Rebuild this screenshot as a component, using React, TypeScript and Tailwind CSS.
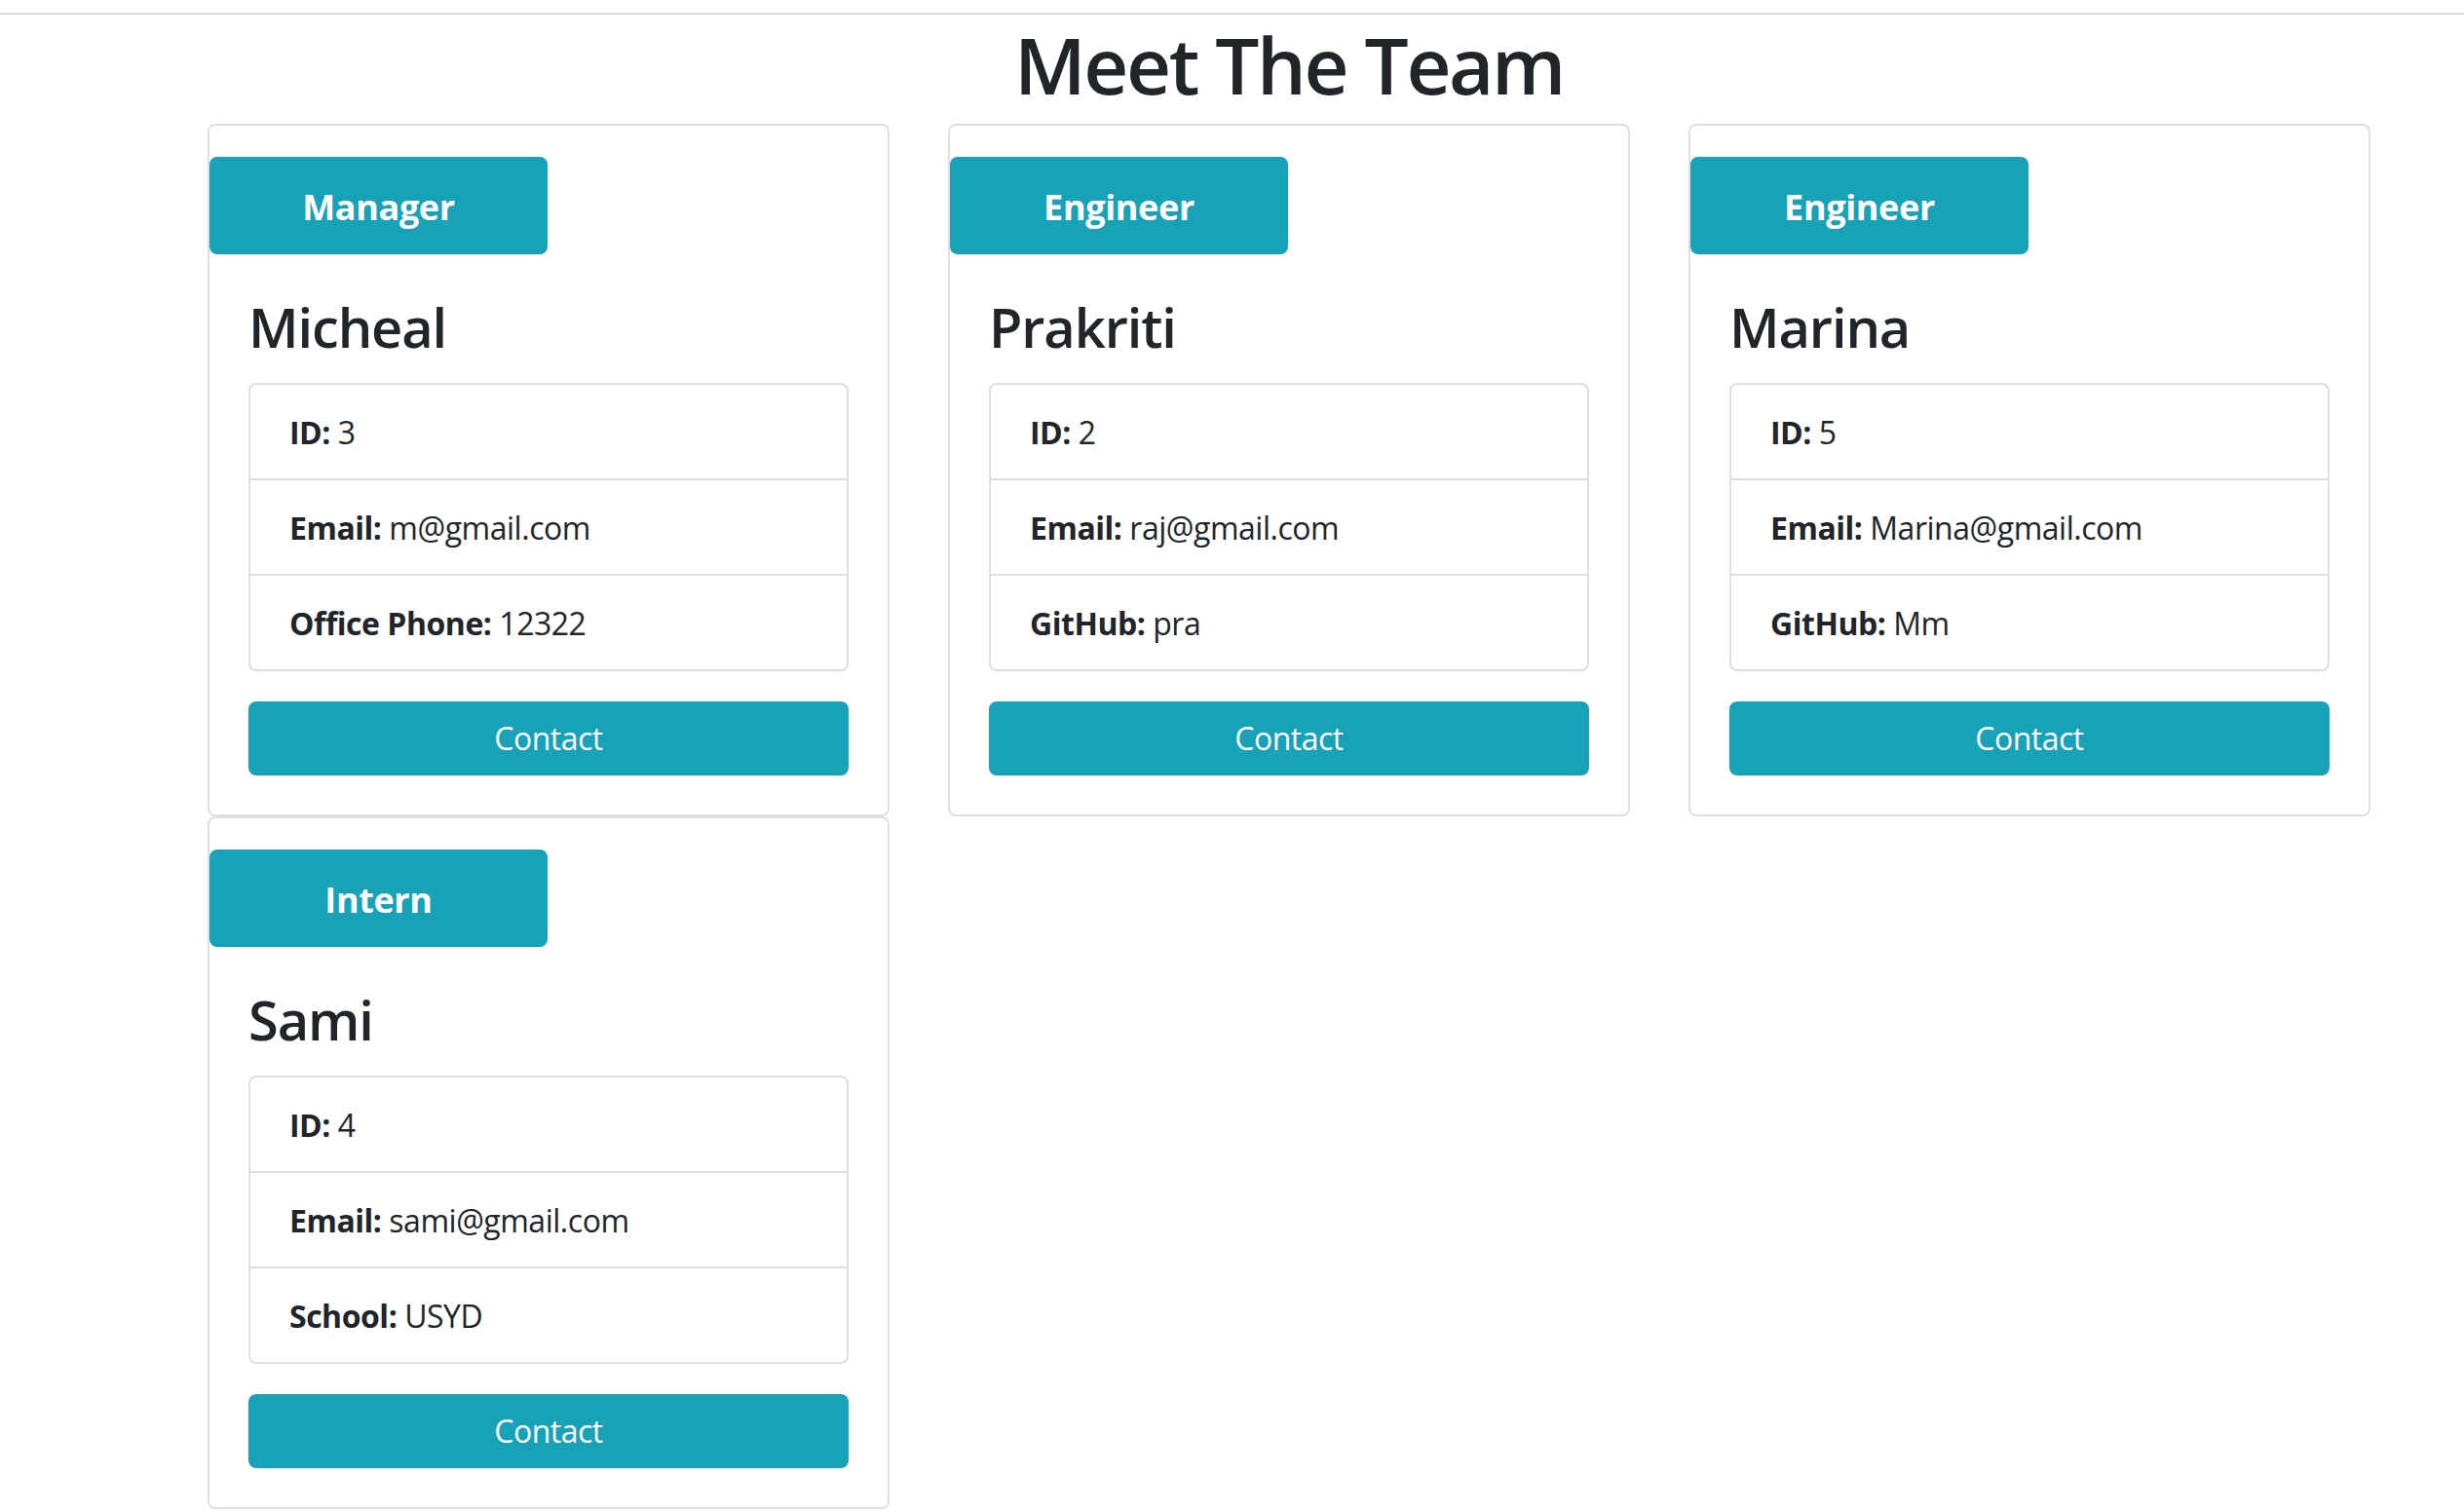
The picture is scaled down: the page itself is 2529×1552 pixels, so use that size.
import React from "react"

interface Member {
  role: string
  name: string
  id: number
  email: string
  extraLabel: string
  extraValue: string
}

const team: Member[] = [
  { role: "Manager", name: "Micheal", id: 3, email: "m@gmail.com", extraLabel: "Office Phone", extraValue: "12322" },
  { role: "Engineer", name: "Prakriti", id: 2, email: "raj@gmail.com", extraLabel: "GitHub", extraValue: "pra" },
  { role: "Engineer", name: "Marina", id: 5, email: "Marina@gmail.com", extraLabel: "GitHub", extraValue: "Mm" },
  { role: "Intern", name: "Sami", id: 4, email: "sami@gmail.com", extraLabel: "School", extraValue: "USYD" },
]

function MemberCard({ member }: { member: Member }) {
  const rows = [
    { label: "ID", value: String(member.id) },
    { label: "Email", value: member.email },
    { label: member.extraLabel, value: member.extraValue },
  ]

  return (
    <div className="flex flex-col border-2 border-[#dfdfdf] rounded-[8px] bg-white">
      {/* role badge */}
      <div className="mt-[32px] w-[347px] h-[100px] pt-[3px] flex items-center justify-center rounded-[8px] bg-[#17a2b8] text-white text-[36px] tracking-[-0.01em] font-bold">
        {member.role}
      </div>

      <div className="px-[40px] pt-[40px] pb-[40px]">
        <h3 className="text-[56px] leading-[69px] tracking-[-0.02em] font-semibold mb-[23px]">{member.name}</h3>

        <ul className="border-2 border-[#dfdfdf] rounded-[8px]">
          {rows.map((row, i) => (
            <li
              key={row.label}
              className={`px-[40px] pt-[25px] pb-[23px] leading-[48px] text-[32px] tracking-[-0.015em] ${i > 0 ? "border-t-2 border-[#dfdfdf]" : ""}`}
            >
              <strong className="font-bold">{row.label}:</strong> {row.value}
            </li>
          ))}
        </ul>

        <button className="mt-[31px] w-full h-[76px] flex items-center justify-center rounded-[8px] bg-[#17a2b8] text-white text-[32px] tracking-[-0.015em]">
          Contact
        </button>
      </div>
    </div>
  )
}

export default function App() {
  return (
    <div className="min-h-screen bg-white text-[#212529] font-['Open_Sans',sans-serif]">
      <div className="h-[13px]" />
      <div className="border-t-2 border-[#dcdcdc]" />

      <div className="ml-[213px] w-[2220px]">
        <h1 className="mt-[1px] mb-[12px] text-center text-[80px] leading-[99px] tracking-[-0.03em] font-semibold">
          Meet The Team
        </h1>

        <div className="grid grid-cols-3 gap-x-[60px]">
          {team.map((m) => (
            <MemberCard key={m.name} member={m} />
          ))}
        </div>
      </div>
    </div>
  )
}
